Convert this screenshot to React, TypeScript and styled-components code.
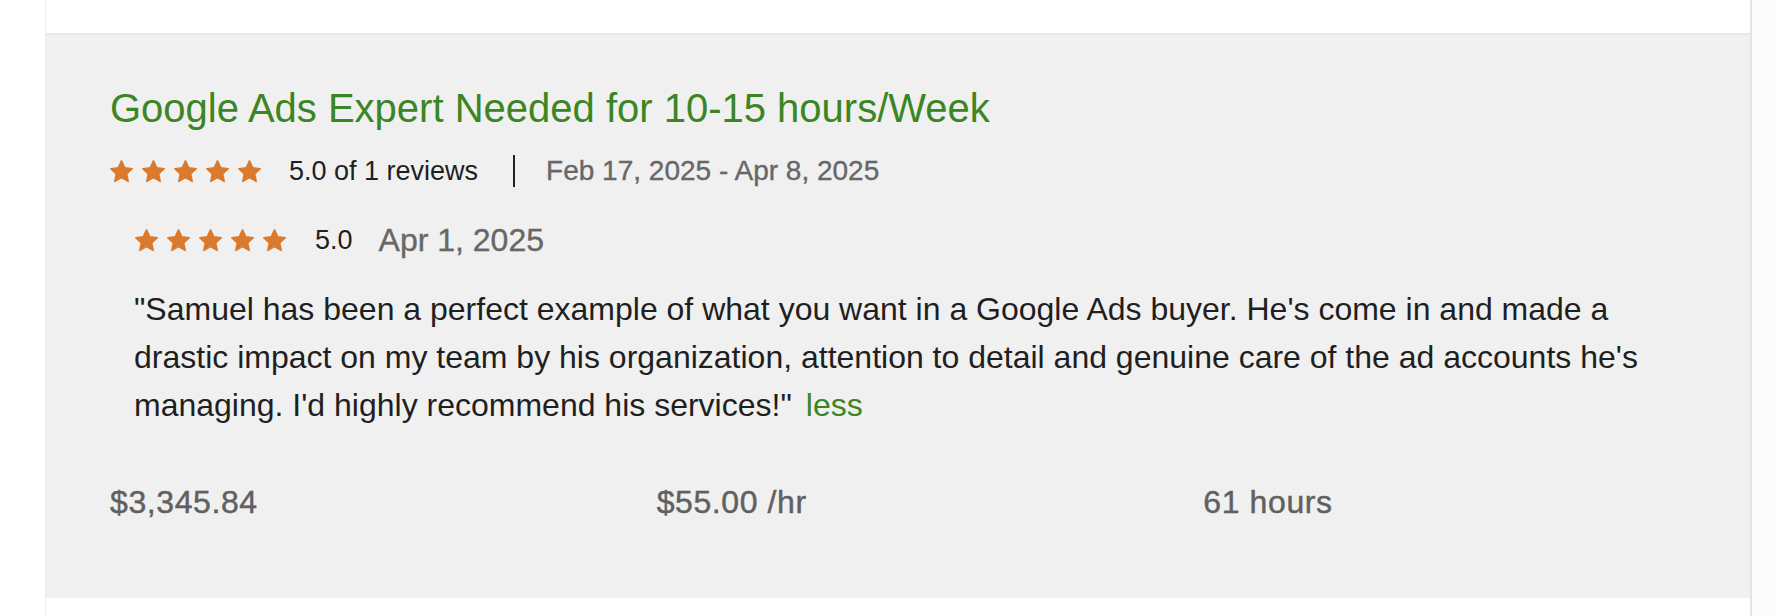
import React from 'react';
import styled, { createGlobalStyle } from 'styled-components';

const GlobalStyle = createGlobalStyle`
    html, body {
        margin: 0;
        padding: 0;
        background: #ffffff;
    }
    body {
        font-family: "Liberation Sans", Arial, sans-serif;
        -webkit-font-smoothing: antialiased;
    }
`;

const Page = styled.div`
    display: flex;
    min-height: 616px;
`;

const Gutter = styled.div`
    width: 45px;
    flex: none;
    background: #ffffff;
`;

// List column with thin side rules
const ListColumn = styled.div`
    width: 1704px;
    flex: none;
    border-left: 1px solid #ededed;
    border-right: 2px solid #e4e4e4;
    display: flex;
    flex-direction: column;
`;

const SidePanel = styled.div`
    flex: 1;
    background: #fbfbfb;
`;

const PrevItem = styled.div`
    height: 33px;
    background: #ffffff;
    border-bottom: 2px solid #e8e8e8;
`;

const HistoryCard = styled.div`
    background: #f0f0f0;
    padding: 49px 64px 76px 64px;
`;

const JobTitle = styled.h3`
    margin: 0;
    font-size: 40px;
    line-height: 48px;
    font-weight: 400;
    color: #3b8523;
`;

const MetaRow = styled.div<{ indent?: number; top: number }>`
    display: flex;
    align-items: center;
    margin-top: ${({ top }) => top}px;
    padding-left: ${({ indent }) => indent || 0}px;
`;

const Stars = styled.div`
    display: flex;
    gap: 9px;
`;

const StarIcon = styled.svg`
    width: 23px;
    height: 23px;
    display: block;
`;

const RatingText = styled.span<{ gap: number }>`
    margin-left: ${({ gap }) => gap}px;
    font-size: 27px;
    line-height: 32px;
    color: #1f1f1f;
`;

const Divider = styled.span`
    width: 2px;
    height: 32px;
    background: #222222;
    margin: 0 31px 0 35px;
`;

const DateText = styled.span<{ size: number; gap?: number }>`
    font-size: ${({ size }) => size}px;
    line-height: 40px;
    color: #676767;
    margin-left: ${({ gap }) => gap || 0}px;
    -webkit-text-stroke: 0.35px #676767;
`;

const Feedback = styled.p`
    margin: 25px 0 0 24px;
    font-size: 32px;
    line-height: 48px;
    color: #1f1f1f;
`;

const LessLink = styled.a`
    display: inline-block;
    color: #3b8523;
    text-decoration: none;
    margin-left: 14px;
    cursor: pointer;
`;

const Stats = styled.div`
    display: grid;
    grid-template-columns: repeat(3, 1fr);
    column-gap: 64px;
    margin-top: 53px;
`;

const Stat = styled.div`
    font-size: 32px;
    line-height: 40px;
    letter-spacing: 0.6px;
    color: #606060;
    -webkit-text-stroke: 0.45px #606060;
`;

const Star = () => (
    <StarIcon viewBox="2 2 20 20">
        <path
            d="M12 2.8l2.8 6 6.5.8-4.8 4.5 1.3 6.5L12 17.3l-5.8 3.3 1.3-6.5-4.8-4.5 6.5-.8z"
            fill="#d97a2e"
            stroke="#d97a2e"
            strokeWidth="1.4"
            strokeLinejoin="round"
        />
    </StarIcon>
);

const FiveStars = () => (
    <Stars>
        {[0, 1, 2, 3, 4].map((i) => (
            <Star key={i} />
        ))}
    </Stars>
);

const App: React.FC = () => {
    return (
        <>
            <GlobalStyle />
            <Page>
                <Gutter />
                <ListColumn>
                    <PrevItem />
                    <HistoryCard>
                        <JobTitle>Google Ads Expert Needed for 10-15 hours/Week</JobTitle>
                        <MetaRow top={19}>
                            <FiveStars />
                            <RatingText gap={28}>5.0 of 1 reviews</RatingText>
                            <Divider />
                            <DateText size={28}>Feb 17, 2025 - Apr 8, 2025</DateText>
                        </MetaRow>
                        <MetaRow indent={25} top={29}>
                            <FiveStars />
                            <RatingText gap={29}>5.0</RatingText>
                            <DateText size={32} gap={26}>Apr 1, 2025</DateText>
                        </MetaRow>
                        <Feedback>
                            "Samuel has been a perfect example of what you want in a Google Ads buyer. He's come in and
                            made a drastic impact on my team by his organization, attention to detail and genuine care
                            of the ad accounts he's managing. I'd highly recommend his services!"
                            <LessLink>less</LessLink>
                        </Feedback>
                        <Stats>
                            <Stat>$3,345.84</Stat>
                            <Stat>$55.00 /hr</Stat>
                            <Stat>61 hours</Stat>
                        </Stats>
                    </HistoryCard>
                </ListColumn>
                <SidePanel />
            </Page>
        </>
    );
};

export default App;
